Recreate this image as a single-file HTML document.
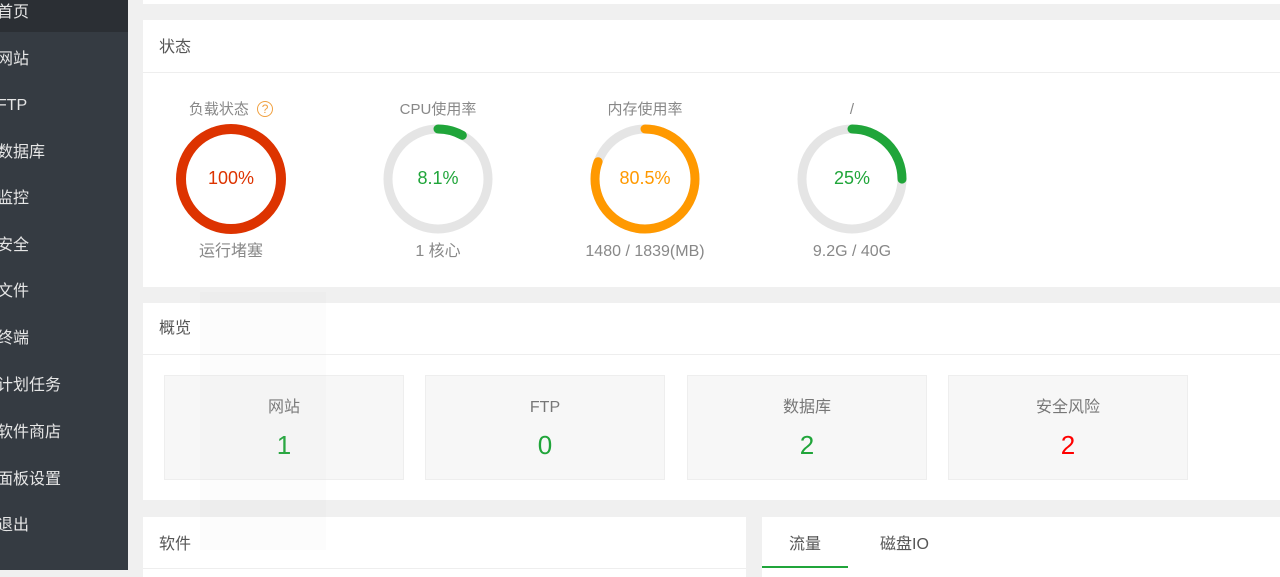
<!DOCTYPE html>
<html><head><meta charset="utf-8"><style>
*{margin:0;padding:0;box-sizing:border-box}
body{width:1280px;height:570px;overflow:hidden;background:#f0f0f0;font-family:"Liberation Sans","Noto Sans CJK SC",sans-serif;position:relative}
.side{position:absolute;left:0;top:0;width:128px;height:570px;background:#353b42}
.side .sel{position:absolute;left:0;top:0;width:128px;height:32px;background:#2b2f34}
.side div.i{position:absolute;left:-3px;font-size:16px;color:#e6e6e6;line-height:20px}
.card{position:absolute;background:#fff}
.hd{position:absolute;left:16px;font-size:16px;color:#555;line-height:20px}
.line{position:absolute;left:0;right:0;height:1px;background:#eee}
.g{position:absolute;text-align:center;width:200px;font-size:15px;color:#888;line-height:20px}
.box{position:absolute;top:375px;width:240px;height:105px;background:#f7f7f7;border:1px solid #eee;text-align:center}
.box .t{margin-top:21px;font-size:16px;color:#777;line-height:22px;height:22px}
.box .n{margin-top:11px;font-size:26px;color:#20a53a;line-height:30px}
</style></head><body>
<div class="side"><div class="sel"></div>
<div class="i" style="top:3px">首页</div>
<div class="i" style="top:50px">网站</div>
<div class="i" style="top:96px">FTP</div>
<div class="i" style="top:143px">数据库</div>
<div class="i" style="top:189px">监控</div>
<div class="i" style="top:236px">安全</div>
<div class="i" style="top:282px">文件</div>
<div class="i" style="top:329px">终端</div>
<div class="i" style="top:376px">计划任务</div>
<div class="i" style="top:423px">软件商店</div>
<div class="i" style="top:470px">面板设置</div>
<div class="i" style="top:516px">退出</div>
</div>
<div class="card" style="left:143px;top:0;width:1137px;height:4px"></div>
<div class="card" style="left:143px;top:20px;width:1137px;height:267px">
<div class="hd" style="top:18px">状态</div><div class="line" style="top:52px"></div>
</div>
<div class="g" style="left:131px;top:100px">负载状态 <span style="display:inline-block;width:16px;height:16px;border:1px solid #f0a040;border-radius:50%;color:#f0a040;font-size:12px;line-height:14px;vertical-align:1px;margin-left:4px">?</span></div>
<div class="g" style="left:338px;top:100px">CPU使用率</div>
<div class="g" style="left:545px;top:100px">内存使用率</div>
<div class="g" style="left:752px;top:100px">/</div>
<svg style="position:absolute;left:0;top:0" width="1280" height="300">
<circle cx="231" cy="179" r="50" fill="none" stroke="#dd3300" stroke-width="10"/>
<g fill="none" stroke-width="9" stroke-linecap="round">
<circle cx="438" cy="179" r="50" stroke="#e5e5e5"/>
<circle cx="438" cy="179" r="50" stroke="#20a53a" stroke-dasharray="25.4 400" transform="rotate(-90 438 179)"/>
<circle cx="645" cy="179" r="50" stroke="#e5e5e5"/>
<circle cx="645" cy="179" r="50" stroke="#ff9900" stroke-dasharray="252.9 400" transform="rotate(-90 645 179)"/>
<circle cx="852" cy="179" r="50" stroke="#e5e5e5"/>
<circle cx="852" cy="179" r="50" stroke="#20a53a" stroke-dasharray="78.5 400" transform="rotate(-90 852 179)"/>
</g>
<g font-family="Liberation Sans, sans-serif" font-size="18" text-anchor="middle">
<text x="231" y="184" fill="#dd3300">100%</text>
<text x="438" y="184" fill="#20a53a">8.1%</text>
<text x="645" y="184" fill="#ff9900">80.5%</text>
<text x="852" y="184" fill="#20a53a">25%</text>
</g></svg>
<div class="g" style="left:131px;top:242px;font-size:16px">运行堵塞</div>
<div class="g" style="left:338px;top:242px;font-size:16px">1 核心</div>
<div class="g" style="left:545px;top:242px;font-size:16px">1480 / 1839(MB)</div>
<div class="g" style="left:752px;top:242px;font-size:16px">9.2G / 40G</div>
<div class="card" style="left:143px;top:303px;width:1137px;height:197px">
<div class="hd" style="top:16px">概览</div><div class="line" style="top:51px"></div>
</div>
<div class="box" style="left:164px"><div class="t">网站</div><div class="n">1</div></div>
<div class="box" style="left:425px"><div class="t">FTP</div><div class="n">0</div></div>
<div class="box" style="left:687px"><div class="t">数据库</div><div class="n">2</div></div>
<div class="box" style="left:948px"><div class="t">安全风险</div><div class="n" style="color:#f00">2</div></div>
<div class="card" style="left:143px;top:517px;width:603px;height:60px">
<div class="hd" style="top:18px">软件</div><div class="line" style="top:51px"></div>
</div>
<div class="card" style="left:762px;top:517px;width:518px;height:60px">
<div style="position:absolute;left:27px;top:18px;font-size:16px;color:#555;line-height:20px">流量</div>
<div style="position:absolute;left:118px;top:18px;font-size:16px;color:#555;line-height:20px">磁盘IO</div>
<div style="position:absolute;left:0;top:49px;width:86px;height:2px;background:#20a53a"></div>
</div>
<div style="position:absolute;left:200px;top:292px;width:126px;height:258px;background:rgba(200,200,200,0.06)"></div>
</body></html>
